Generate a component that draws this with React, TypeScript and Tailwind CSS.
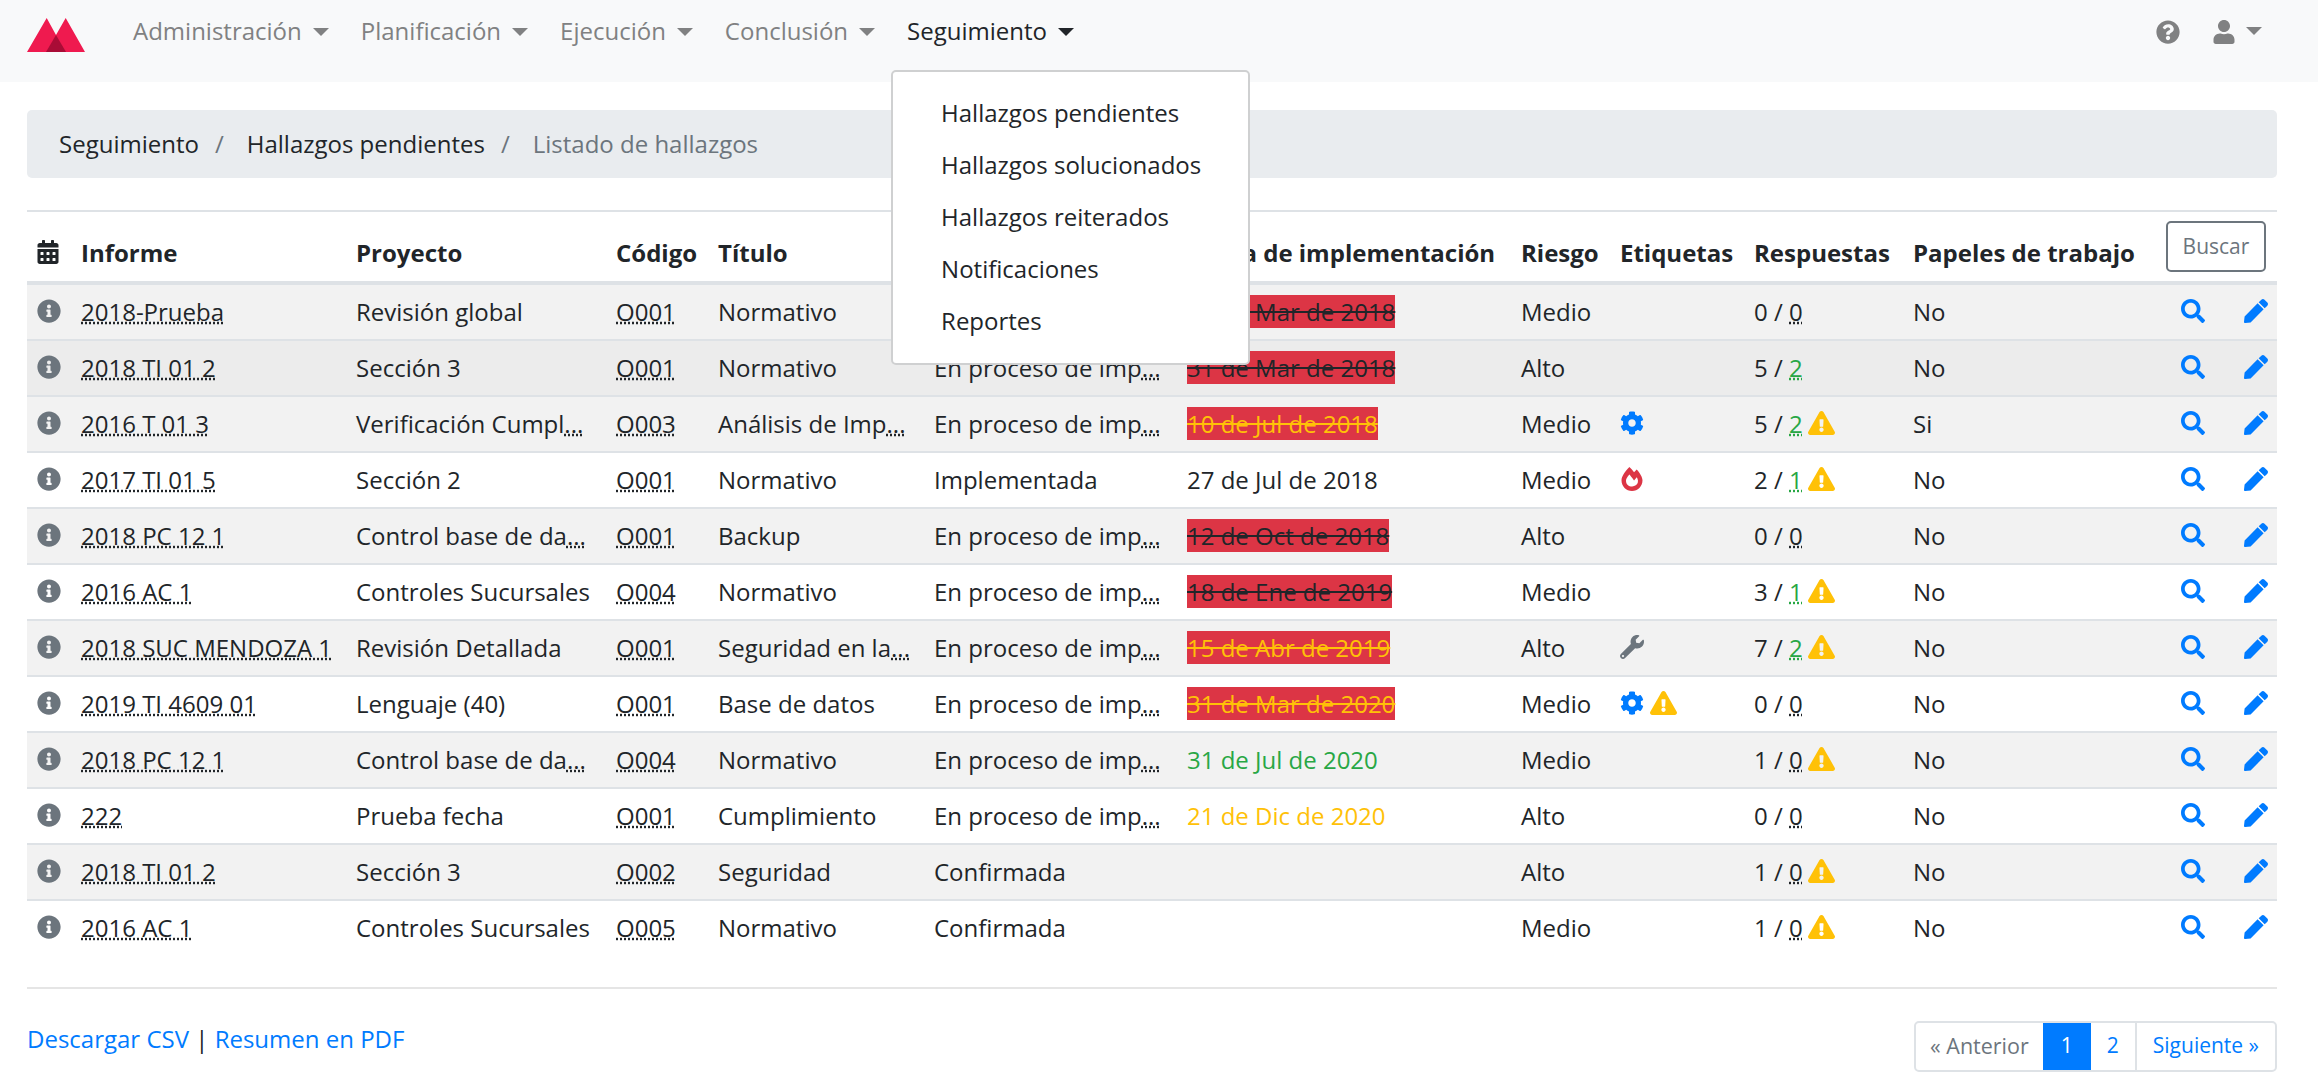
import {
  FaCalendarAlt,
  FaCog,
  FaExclamationTriangle,
  FaFireAlt,
  FaInfoCircle,
  FaPen,
  FaQuestionCircle,
  FaSearch,
  FaUser,
  FaWrench,
} from "react-icons/fa";

type Tag = "cog" | "fire" | "wrench" | "warn";
type DateStyle = "overdueDark" | "overdueYellow" | "green" | "yellow" | "plain";

interface Row {
  informe: string;
  proyecto: string;
  proyectoCut?: boolean;
  codigo: string;
  titulo: string;
  tituloCut?: boolean;
  estado: string;
  estadoCut?: boolean;
  fecha?: string;
  fechaStyle?: DateStyle;
  riesgo: string;
  tags?: Tag[];
  resp: number;
  sol: number;
  warn?: boolean;
  papeles: string;
  rowClass: string;
}

const striped = "bg-[#f2f2f2]";
const plain = "bg-white";
const proceso = "En proceso de imp";

const rows: Row[] = [
  { informe: "2018-Prueba", proyecto: "Revisión global", codigo: "O001", titulo: "Normativo", estado: proceso, estadoCut: true, fecha: "31 de Mar de 2018", fechaStyle: "overdueDark", riesgo: "Medio", resp: 0, sol: 0, papeles: "No", rowClass: striped },
  { informe: "2018 TI 01 2", proyecto: "Sección 3", codigo: "O001", titulo: "Normativo", estado: proceso, estadoCut: true, fecha: "31 de Mar de 2018", fechaStyle: "overdueDark", riesgo: "Alto", resp: 5, sol: 2, papeles: "No", rowClass: "bg-[#ececec]" },
  { informe: "2016 T 01 3", proyecto: "Verificación Cumpl", proyectoCut: true, codigo: "O003", titulo: "Análisis de Imp", tituloCut: true, estado: proceso, estadoCut: true, fecha: "10 de Jul de 2018", fechaStyle: "overdueYellow", riesgo: "Medio", tags: ["cog"], resp: 5, sol: 2, warn: true, papeles: "Si", rowClass: striped },
  { informe: "2017 TI 01 5", proyecto: "Sección 2", codigo: "O001", titulo: "Normativo", estado: "Implementada", fecha: "27 de Jul de 2018", fechaStyle: "plain", riesgo: "Medio", tags: ["fire"], resp: 2, sol: 1, warn: true, papeles: "No", rowClass: plain },
  { informe: "2018 PC 12 1", proyecto: "Control base de da", proyectoCut: true, codigo: "O001", titulo: "Backup", estado: proceso, estadoCut: true, fecha: "12 de Oct de 2018", fechaStyle: "overdueDark", riesgo: "Alto", resp: 0, sol: 0, papeles: "No", rowClass: striped },
  { informe: "2016 AC 1", proyecto: "Controles Sucursales", codigo: "O004", titulo: "Normativo", estado: proceso, estadoCut: true, fecha: "18 de Ene de 2019", fechaStyle: "overdueDark", riesgo: "Medio", resp: 3, sol: 1, warn: true, papeles: "No", rowClass: plain },
  { informe: "2018 SUC MENDOZA 1", proyecto: "Revisión Detallada", codigo: "O001", titulo: "Seguridad en la", tituloCut: true, estado: proceso, estadoCut: true, fecha: "15 de Abr de 2019", fechaStyle: "overdueYellow", riesgo: "Alto", tags: ["wrench"], resp: 7, sol: 2, warn: true, papeles: "No", rowClass: striped },
  { informe: "2019 TI 4609 01", proyecto: "Lenguaje (40)", codigo: "O001", titulo: "Base de datos", estado: proceso, estadoCut: true, fecha: "31 de Mar de 2020", fechaStyle: "overdueYellow", riesgo: "Medio", tags: ["cog", "warn"], resp: 0, sol: 0, papeles: "No", rowClass: plain },
  { informe: "2018 PC 12 1", proyecto: "Control base de da", proyectoCut: true, codigo: "O004", titulo: "Normativo", estado: proceso, estadoCut: true, fecha: "31 de Jul de 2020", fechaStyle: "green", riesgo: "Medio", resp: 1, sol: 0, warn: true, papeles: "No", rowClass: striped },
  { informe: "222", proyecto: "Prueba fecha", codigo: "O001", titulo: "Cumplimiento", estado: proceso, estadoCut: true, fecha: "21 de Dic de 2020", fechaStyle: "yellow", riesgo: "Alto", resp: 0, sol: 0, papeles: "No", rowClass: plain },
  { informe: "2018 TI 01 2", proyecto: "Sección 3", codigo: "O002", titulo: "Seguridad", estado: "Confirmada", riesgo: "Alto", resp: 1, sol: 0, warn: true, papeles: "No", rowClass: striped },
  { informe: "2016 AC 1", proyecto: "Controles Sucursales", codigo: "O005", titulo: "Normativo", estado: "Confirmada", riesgo: "Medio", resp: 1, sol: 0, warn: true, papeles: "No", rowClass: plain },
];

const navItems = ["Administración", "Planificación", "Ejecución", "Conclusión"];
const menuItems = ["Hallazgos pendientes", "Hallazgos solucionados", "Hallazgos reiterados", "Notificaciones", "Reportes"];

const dateClasses: Record<DateStyle, string> = {
  overdueDark: "bg-[#dc3545] line-through text-[#212529]",
  overdueYellow: "bg-[#dc3545] line-through text-[#ffc107]",
  green: "text-[#28a745]",
  yellow: "text-[#ffc107]",
  plain: "",
};

const Caret = ({ className }: { className: string }) => (
  <span className={`inline-block ml-[11px] align-[4px] border-x-[8px] border-t-[8px] border-x-transparent ${className}`} />
);

const Logo = () => (
  <svg width="58" height="34" viewBox="0 0 58 34" className="block">
    <path d="M0 34 19.7 0 29 17 38.7 0 58 34Z" fill="#ef1a4f" />
    <path d="M19 34 29 17 39 34Z" fill="#a90c36" />
  </svg>
);

const Cut = ({ text, cut }: { text: string; cut?: boolean }) => (
  <>
    {text}
    {cut && <abbr title={text} className="underline decoration-dotted">...</abbr>}
  </>
);

const TagIcon = ({ tag }: { tag: Tag }) => {
  if (tag === "cog") return <FaCog className="text-[#007bff] text-[24px]" />;
  if (tag === "fire") return <FaFireAlt className="text-[#dc3545] text-[24px]" />;
  if (tag === "wrench") return <FaWrench className="text-[#6c757d] text-[24px]" />;
  return <FaExclamationTriangle className="text-[#ffc107] w-[27px] h-[24px]" />;
};

const Navbar = () => (
  <nav className="flex h-[82px] bg-[#f8f9fa] pl-[27px] pr-[56px] pt-[14px]">
    <a className="mr-[32px] mt-[4px]"><Logo /></a>
    <ul className="flex">
      {navItems.map((item) => (
        <li key={item} className="px-[16px] text-[#808182] whitespace-nowrap">
          {item}
          <Caret className="border-t-[#808182]" />
        </li>
      ))}
      <li className="relative px-[16px] text-[#212529] whitespace-nowrap">
        Seguimiento
        <Caret className="border-t-[#212529]" />
        <ul className="absolute left-0 top-[56px] z-10 w-[359px] rounded-[5px] border-2 border-[#cfd0d1] bg-white pt-[14px] pb-[17px]">
          {menuItems.map((m) => (
            <li key={m} className="flex h-[52px] items-center pl-[48px]">{m}</li>
          ))}
        </ul>
      </li>
    </ul>
    <div className="ml-auto flex items-start pt-[6px] text-[#808182]">
      <FaQuestionCircle className="text-[24px]" />
      <FaUser className="ml-[32px] text-[24px]" />
      <span className="-ml-[1px] mt-[7px] flex"><Caret className="border-t-[#808182]" /></span>
    </div>
  </nav>
);

const Th = ({ children }: { children?: React.ReactNode }) => (
  <th className="pb-[12px] text-left align-bottom font-bold whitespace-nowrap">{children}</th>
);

export default function App() {
  return (
    <div className="min-h-[1086px] bg-white font-['Open_Sans',sans-serif] text-[24px] leading-[33px] text-[#212529]">
      <Navbar />
      <main className="pl-[27px] pr-[41px] pt-[28px]">
        <div className="flex h-[68px] items-center rounded-[5px] bg-[#e9ecef] pb-[2px] pl-[32px]">
          <span>Seguimiento</span>
          <span className="pl-[16px] pr-[23px] text-[#6c757d]">/</span>
          <span>Hallazgos pendientes</span>
          <span className="pl-[16px] pr-[23px] text-[#6c757d]">/</span>
          <span className="text-[#6c757d]">Listado de hallazgos</span>
        </div>
        <hr className="mt-[32px] border-t-2 border-[#dee2e6]" />
        <table className="w-full table-fixed border-separate border-spacing-0">
          <colgroup>
            <col className="w-[54px]" />
            <col className="w-[275px]" />
            <col className="w-[260px]" />
            <col className="w-[102px]" />
            <col className="w-[216px]" />
            <col className="w-[253px]" />
            <col className="w-[334px]" />
            <col className="w-[99px]" />
            <col className="w-[134px]" />
            <col className="w-[159px]" />
            <col className="w-[250px]" />
            <col />
          </colgroup>
          <thead>
            <tr className="h-[73px] [&>th]:border-b-4 [&>th]:border-[#dee2e6]">
              <Th><span className="flex justify-start pl-[9px] pb-[5px]"><FaCalendarAlt className="text-[24px]" /></span></Th>
              <Th>Informe</Th>
              <Th>Proyecto</Th>
              <Th>Código</Th>
              <Th>Título</Th>
              <Th>Estado</Th>
              <Th>Fecha de implementación</Th>
              <Th>Riesgo</Th>
              <Th>Etiquetas</Th>
              <Th>Respuestas</Th>
              <Th>Papeles de trabajo</Th>
              <th className="pb-[9px] pl-[3px] text-left align-bottom">
                <button className="h-[51px] w-[100px] rounded-[5px] border-2 border-[#6c757d] bg-white text-[#6c757d] text-[21px] font-normal">Buscar</button>
              </th>
            </tr>
          </thead>
          <tbody>
            {rows.map((row, i) => (
              <tr key={i} className={`h-[56px] ${row.rowClass} ${i < rows.length - 1 ? "[&>td]:pb-[2px] [&>td]:border-b-2 [&>td]:border-[#dee2e6]" : "[&>td]:pb-[4px]"}`}>
                <td className="pl-[10px]"><FaInfoCircle className="text-[24px] text-[#6c757d]" /></td>
                <td className="whitespace-nowrap"><abbr title={row.informe} className="underline decoration-dotted">{row.informe}</abbr></td>
                <td className="whitespace-nowrap"><Cut text={row.proyecto} cut={row.proyectoCut} /></td>
                <td><abbr title={row.codigo} className="underline decoration-dotted">{row.codigo}</abbr></td>
                <td className="whitespace-nowrap"><Cut text={row.titulo} cut={row.tituloCut} /></td>
                <td className="whitespace-nowrap"><Cut text={row.estado} cut={row.estadoCut} /></td>
                <td className="whitespace-nowrap">
                  {row.fecha && row.fechaStyle && <span className={`inline-block ${dateClasses[row.fechaStyle]}`}>{row.fecha}</span>}
                </td>
                <td>{row.riesgo}</td>
                <td>
                  <span className="flex items-center gap-[6px]">
                    {row.tags?.map((t) => <TagIcon key={t} tag={t} />)}
                  </span>
                </td>
                <td className="whitespace-nowrap">
                  <span className="flex items-center">
                    {row.resp} /&nbsp;
                    <abbr title="Solucionadas" className={`underline decoration-dotted ${row.sol > 0 ? "text-[#28a745]" : ""}`}>{row.sol}</abbr>
                    {row.warn && <FaExclamationTriangle className="ml-[5px] h-[24px] w-[27px] text-[#ffc107]" />}
                  </span>
                </td>
                <td>{row.papeles}</td>
                <td>
                  <span className="flex items-center pl-[18px] text-[#007bff]">
                    <FaSearch className="text-[24px]" />
                    <FaPen className="ml-[39px] text-[24px]" />
                  </span>
                </td>
              </tr>
            ))}
          </tbody>
        </table>
        <hr className="mt-[30px] border-t-2 border-[#e5e5e5]" />
        <div className="mt-[32px] flex items-start justify-between">
          <div className="pt-[1px]">
            <a className="text-[#007bff]">Descargar CSV</a>
            <span> | </span>
            <a className="text-[#007bff]">Resumen en PDF</a>
          </div>
          <div className="flex h-[51px] rounded-[5px] border-2 border-[#dee2e6] text-[21px]">
            <span className="flex items-center px-[14px] pb-[2px] text-[21.5px] text-[#6c757d]">« Anterior</span>
            <span className="flex items-center bg-[#007bff] px-[18px] pb-[2px] text-white">1</span>
            <span className="flex items-center border-r-2 border-[#dee2e6] px-[16px] pb-[2px] text-[#007bff]">2</span>
            <span className="flex items-center px-[16px] pb-[2px] text-[#007bff]">Siguiente »</span>
          </div>
        </div>
      </main>
    </div>
  );
}
